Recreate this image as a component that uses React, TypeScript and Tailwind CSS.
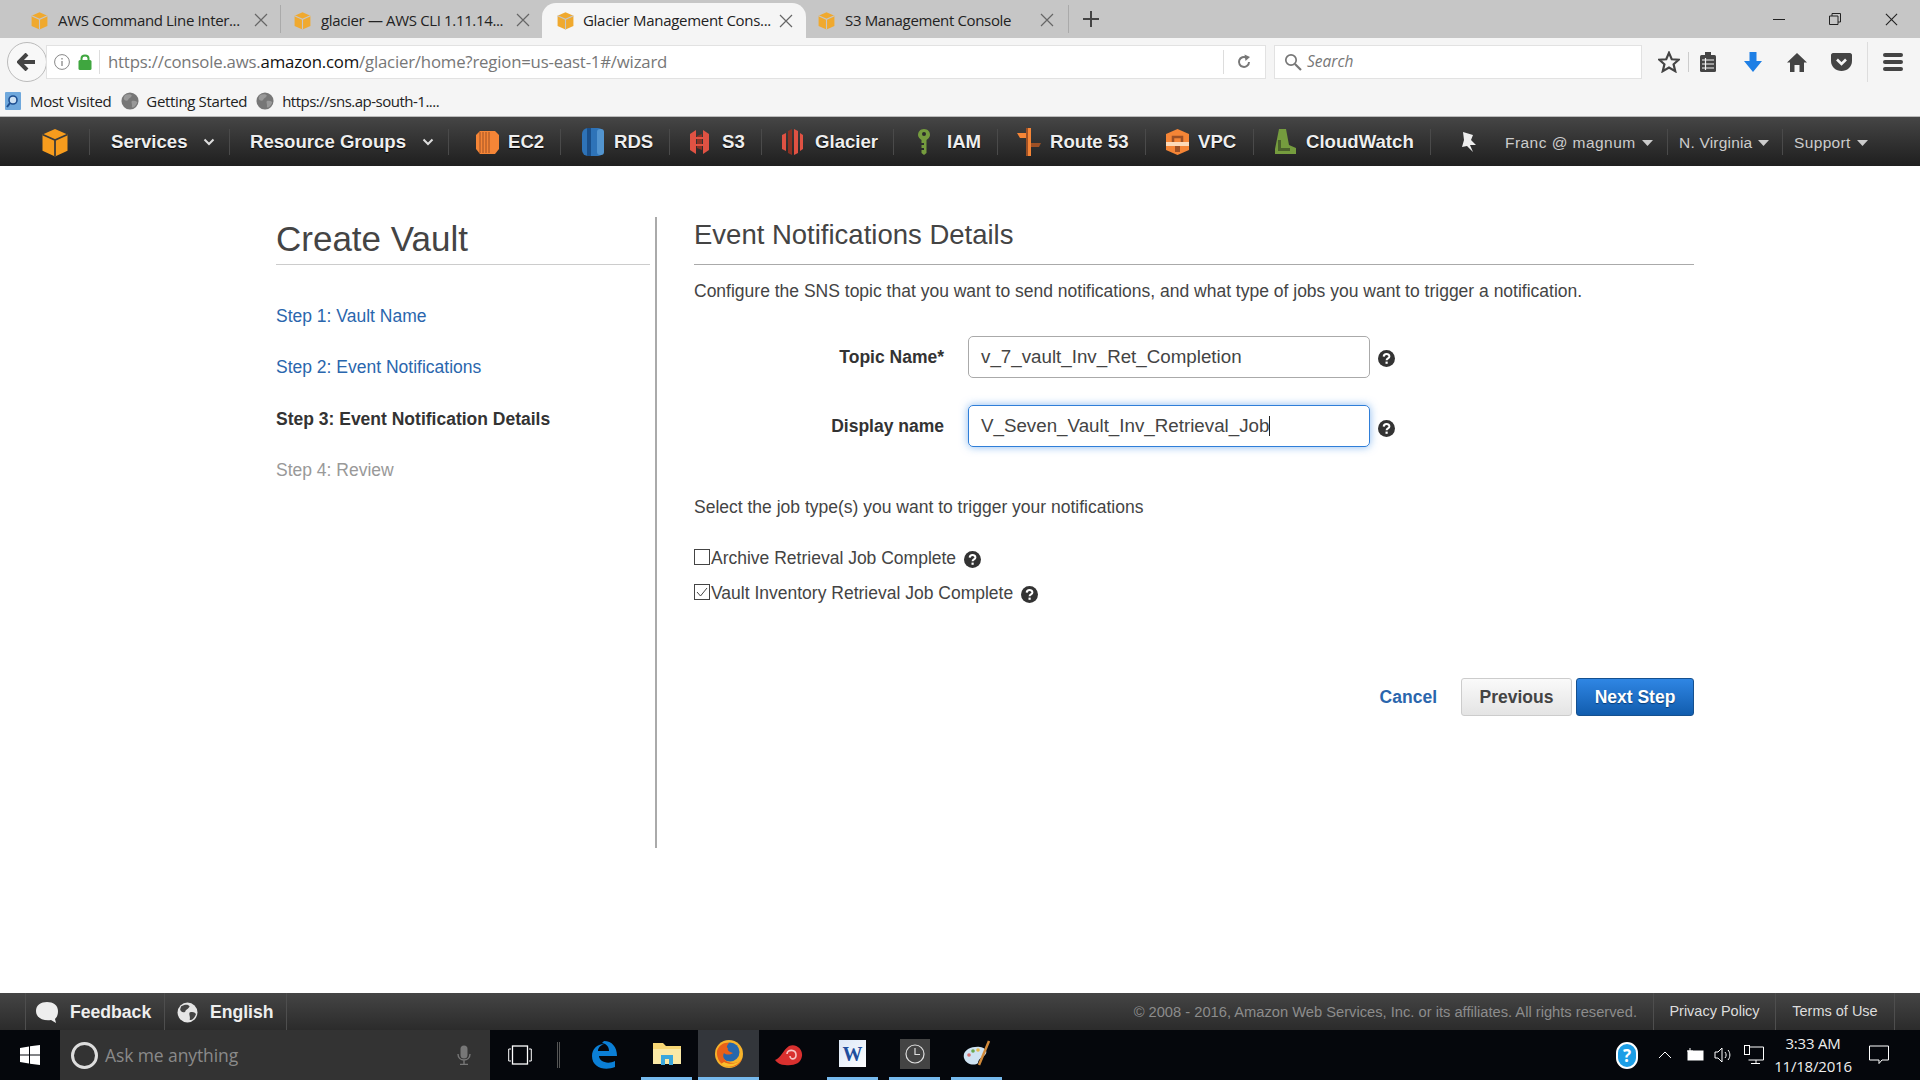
import React from "react";

const Cube = ({ s = 20, c = "#f0a92e", d = "#c6c6c6" }: { s?: number; c?: string; d?: string }) => (
  <svg width={s} height={s} viewBox="0 0 24 24" className="shrink-0">
    <polygon points="2,6 12,1.5 22,6 22,19 12,23.5 2,19" fill={c} />
    <path d="M2 6 L12 10.5 L22 6 M12 10.5 V23.5" stroke={d} strokeWidth="1.4" fill="none" />
  </svg>
);

const X = ({ s = 14, c = "#666" }: { s?: number; c?: string }) => (
  <svg width={s} height={s} viewBox="0 0 14 14" className="shrink-0">
    <path d="M1 1 L13 13 M13 1 L1 13" stroke={c} strokeWidth="1.2" />
  </svg>
);

const Globe = ({ s = 20, c = "#8a8a8a", l = "#d5d5d5" }: { s?: number; c?: string; l?: string }) => (
  <svg width={s} height={s} viewBox="0 0 20 20" className="shrink-0">
    <circle cx="10" cy="10" r="9.5" fill={l} />
    <path d="M4 4 C7 2 11 2 12 4 C11 7 8 7 8 9 C6 11 3 9 3 7Z M12 10 C15 9 18 10 18 12 C16 16 14 18 12 17 C13 14 11 12 12 10Z" fill={c} />
  </svg>
);

const Help = ({ s = 17 }: { s?: number }) => (
  <svg width={s} height={s} viewBox="0 0 17 17" className="shrink-0">
    <circle cx="8.5" cy="8.5" r="8.5" fill="#333" />
    <path d="M5.7 6.6 C5.8 3.3 11.4 3.2 11.4 6.4 C11.4 8.4 8.6 8.4 8.6 10.3" stroke="#fff" strokeWidth="2" fill="none" />
    <rect x="7.5" y="11.6" width="2.2" height="2.2" fill="#fff" />
  </svg>
);

const Chev = () => (
  <svg width="12" height="8" viewBox="0 0 12 8" className="shrink-0">
    <path d="M1.5 1.5 L6 6 L10.5 1.5" stroke="#ddd" strokeWidth="2" fill="none" />
  </svg>
);

const Caret = () => (
  <svg width="11" height="6" viewBox="0 0 11 6" className="shrink-0">
    <path d="M0 0 H11 L5.5 6Z" fill="#ccc" />
  </svg>
);

const Ec2 = () => (
  <svg width="23" height="26" viewBox="0 0 23 26" className="shrink-0">
    <polygon points="4,2 19,2 23,6 23,20 19,25 4,25 0,20 0,6" fill="#f58536" />
    <path d="M4 3V24M7 3V24M10 3V24M13 3V24" stroke="#9d5025" strokeWidth="1" />
  </svg>
);
const Rds = () => (
  <svg width="24" height="28" viewBox="0 0 24 28" className="shrink-0">
    <rect x="1" y="0" width="22" height="28" rx="6" fill="#2e73b8" />
    <rect x="6" y="0" width="4" height="28" fill="#1a4f8a" />
    <rect x="16" y="1" width="7" height="26" rx="3" fill="#5294cf" />
  </svg>
);
const S3 = () => (
  <svg width="19" height="26" viewBox="0 0 19 26" className="shrink-0">
    <polygon points="0,5 6,1 6,25 0,21" fill="#e05243" />
    <polygon points="19,5 13,1 13,25 19,21" fill="#e05243" />
    <polygon points="7,7 12,5 12,21 7,19" fill="#8c3123" />
    <path d="M6 9 H13 M6 16 H13" stroke="#e05243" strokeWidth="2" />
  </svg>
);
const Glacier = () => (
  <svg width="21" height="26" viewBox="0 0 21 26" className="shrink-0">
    <polygon points="0,6 4,4 4,22 0,20" fill="#e05243" />
    <polygon points="6,2 10,0 10,26 6,24" fill="#8c3123" />
    <polygon points="12,0 16,2 16,24 12,26" fill="#e05243" />
    <polygon points="18,4 21,6 21,20 18,22" fill="#e05243" />
  </svg>
);
const Iam = () => (
  <svg width="12" height="26" viewBox="0 0 12 26" className="shrink-0">
    <path d="M6 0 C10 0 12 3 12 6 C12 8 10 10 8.5 11 V24 L6 26 L3.5 24 V21 H6 V19 H3.5 V16 H6 V14 H3.5 V11 C2 10 0 8 0 6 C0 3 2 0 6 0Z" fill="#759c3e" />
    <circle cx="6" cy="5" r="2" fill="#2b2b2b" />
  </svg>
);
const Route = () => (
  <svg width="24" height="28" viewBox="0 0 24 28" className="shrink-0">
    <rect x="9" y="0" width="5" height="28" fill="#f58536" />
    <polygon points="0,5 9,5 9,10 3,10" fill="#f58536" />
    <polygon points="14,15 24,15 22,19 14,19" fill="#9d5025" />
    <rect x="9" y="0" width="2" height="28" fill="#9d5025" />
  </svg>
);
const Vpc = () => (
  <svg width="23" height="26" viewBox="0 0 23 26" className="shrink-0">
    <polygon points="11.5,0 23,5 23,21 11.5,26 0,21 0,5" fill="#f58536" />
    <path d="M7 13 V8 H16 V13" stroke="#9d5025" strokeWidth="2.5" fill="none" />
    <rect x="0" y="13" width="23" height="4" fill="#fcd9b8" />
    <rect x="9" y="17" width="5" height="6" fill="#9d5025" />
  </svg>
);
const Cw = () => (
  <svg width="24" height="26" viewBox="0 0 24 26" className="shrink-0">
    <polygon points="3,20 7,0 14,0 17,16 24,19 24,25 3,25" fill="#759c3e" />
    <polygon points="6,11 9,11 9,19 18,19 18,22 6,22" fill="#4b612c" />
  </svg>
);

type NavItem = { w: string; icon?: React.ReactNode; label: string; gap?: string; pl: string; chev?: boolean };
const navItems: NavItem[] = [
  { w: "w-[140px]", label: "Services", pl: "pl-[21px]", chev: true, gap: "gap-[15px]" },
  { w: "w-[219px]", label: "Resource Groups", pl: "pl-[20px]", chev: true, gap: "gap-[16px]" },
  { w: "w-[112px]", icon: <Ec2 />, label: "EC2", pl: "pl-[27px]", gap: "gap-[9px]" },
  { w: "w-[109px]", icon: <Rds />, label: "RDS", pl: "pl-[20px]", gap: "gap-[9px]" },
  { w: "w-[92px]", icon: <S3 />, label: "S3", pl: "pl-[20px]", gap: "gap-[13px]" },
  { w: "w-[132px]", icon: <Glacier />, label: "Glacier", pl: "pl-[20px]", gap: "gap-[12px]" },
  { w: "w-[104px]", icon: <Iam />, label: "IAM", pl: "pl-[24px]", gap: "gap-[17px]" },
  { w: "w-[148px]", icon: <Route />, label: "Route 53", pl: "pl-[19px]", gap: "gap-[9px]" },
  { w: "w-[108px]", icon: <Vpc />, label: "VPC", pl: "pl-[20px]", gap: "gap-[9px]" },
  { w: "w-[177px]", icon: <Cw />, label: "CloudWatch", pl: "pl-[18px]", gap: "gap-[10px]" },
];

const sans = "font-['Liberation_Sans',Arial,sans-serif]";
const ui = "font-['Open_Sans','Noto_Sans',sans-serif]";

const Tab = ({ title, w, pl, closeGap }: { title: string; w: string; pl: string; closeGap: string }) => (
  <div className={`${w} ${pl} h-[38px] pt-[2px] flex items-center shrink-0 text-[15px] text-[#222] ${ui} tracking-[-0.35px]`}>
    <Cube s={19} />
    <span className={`ml-[9px] mr-[7px] whitespace-nowrap ${closeGap}`}>{title}</span>
    <X />
  </div>
);

function Browser() {
  return (
    <>
      <div className="h-[38px] bg-[#c6c6c6] flex shrink-0 items-center">
        <Tab title="AWS Command Line Inter..." w="w-[280px]" pl="pl-[30px]" closeGap="w-[189px]" />
        <div className="w-px h-[28px] bg-[#aaa]" />
        <Tab title="glacier — AWS CLI 1.11.14..." w="w-[261px]" pl="pl-[12px]" closeGap="w-[188px]" />
        <div className="w-[264px] h-[35px] self-end bg-[#f5f5f5] rounded-t-[14px] shrink-0 flex items-center pl-[14px] text-[15px] text-[#222] tracking-[-0.3px]">
          <Cube s={19} />
          <span className={`ml-[8px] w-[196px] whitespace-nowrap ${ui}`}>Glacier Management Cons...</span>
          <X />
        </div>
        <Tab title="S3 Management Console" w="w-[262px]" pl="pl-[11px]" closeGap="w-[188px]" />
        <div className="w-px h-[28px] bg-[#aaa]" />
        <svg width="16" height="16" viewBox="0 0 16 16" className="ml-[14px] shrink-0">
          <path d="M8 0V16M0 8H16" stroke="#444" strokeWidth="2" />
        </svg>
        <div className="ml-auto flex items-center">
          <div className="w-[12px] h-px bg-[#222] mr-[44px]" />
          <svg width="12" height="12" viewBox="0 0 12 12" className="mr-[44px]">
            <path d="M0.5 3 H9 V11.5 H0.5Z M3 3 V0.5 H11.5 V9 H9" stroke="#222" fill="none" />
          </svg>
          <div className="mr-[22px]"><X s={13} c="#222" /></div>
        </div>
      </div>

      <div className="h-[78px] bg-[#f5f5f5] shrink-0 flex flex-col">
        <div className="h-[48px] flex items-center shrink-0">
          <div className="ml-[7px] w-[40px] h-[40px] rounded-full border border-[#bbb] bg-[#f8f8f8] flex items-center justify-center shrink-0">
            <svg width="20" height="18" viewBox="0 0 20 18">
              <path d="M10 1 L2 9 L10 17 M2 9 H18" stroke="#444" strokeWidth="4" fill="none" />
            </svg>
          </div>
          <div className="ml-[-1px] h-[34px] w-[1220px] bg-white border border-[#e2e2e2] flex items-center shrink-0 pl-[7px]">
            <svg width="16" height="16" viewBox="0 0 16 16" className="shrink-0">
              <circle cx="8" cy="8" r="7.4" stroke="#888" fill="none" />
              <path d="M8 7V12M8 4V5.5" stroke="#888" strokeWidth="1.3" />
            </svg>
            <svg width="14" height="16" viewBox="0 0 14 16" className="ml-[8px] shrink-0">
              <rect x="0.5" y="6" width="13" height="10" rx="1.5" fill="#3fa63f" />
              <path d="M3.5 6 V4.5 C3.5 0.5 10.5 0.5 10.5 4.5 V6" stroke="#3fa63f" strokeWidth="2" fill="none" />
            </svg>
            <div className="ml-[7px] w-px h-[24px] bg-[#ddd]" />
            <span className={`ml-[8px] text-[16.8px] text-[#777] whitespace-nowrap flex-1 ${ui} tracking-[-0.2px]`}>
              https://console.aws.<span className="text-[#111]">amazon.com</span>/glacier/home?region=us-east-1#/wizard
            </span>
            <div className="w-px h-[24px] bg-[#ddd]" />
            <svg width="16" height="16" viewBox="0 0 16 16" className="ml-[12px] mr-[13px] shrink-0">
              <path d="M13 8 A5 5 0 1 1 10.5 3.6" stroke="#777" strokeWidth="2" fill="none" />
              <path d="M8.5 0.5 L14 3 L9.5 7Z" fill="#777" />
            </svg>
          </div>
          <div className="ml-[8px] h-[34px] w-[368px] bg-white border border-[#e2e2e2] flex items-center shrink-0 pl-[9px]">
            <svg width="18" height="18" viewBox="0 0 18 18">
              <circle cx="7" cy="7" r="5.2" stroke="#777" strokeWidth="1.7" fill="none" />
              <path d="M11 11 L17 17" stroke="#777" strokeWidth="2.2" />
            </svg>
            <span className={`ml-[5px] text-[15.5px] italic text-[#777] ${ui}`}>Search</span>
          </div>
          <svg width="22" height="22" viewBox="0 0 24 24" className="ml-[16px] shrink-0">
            <polygon points="12,2 15,9 22.5,9.5 17,14.5 18.8,22 12,18 5.2,22 7,14.5 1.5,9.5 9,9" stroke="#444" strokeWidth="2.4" fill="none" />
          </svg>
          <div className="ml-[8px] w-px h-[20px] bg-[#ccc]" />
          <svg width="18" height="20" viewBox="0 0 18 20" className="ml-[10px] shrink-0">
            <rect x="1" y="3" width="16" height="17" rx="1.5" fill="#444" />
            <rect x="6" y="0" width="6" height="4" fill="#444" />
            <path d="M3 8H15M3 12H15M3 16H15M6.5 6V18" stroke="#f5f5f5" strokeWidth="1.2" />
          </svg>
          <svg width="18" height="20" viewBox="0 0 18 20" className="ml-[27px] shrink-0">
            <path d="M5.5 0 H12.5 V9 H18 L9 20 L0 9 H5.5Z" fill="#1e7fe5" />
          </svg>
          <svg width="20" height="19" viewBox="0 0 20 19" className="ml-[25px] shrink-0">
            <path d="M10 0 L20 9.5 H17 V19 H12.5 V12 H7.5 V19 H3 V9.5 H0Z" fill="#444" />
          </svg>
          <svg width="21" height="18" viewBox="0 0 21 18" className="ml-[24px] shrink-0">
            <path d="M2 0 H19 C20 0 21 1 21 2 V8 C21 14 16 18 10.5 18 C5 18 0 14 0 8 V2 C0 1 1 0 2 0Z" fill="#444" />
            <path d="M6 6.5 L10.5 11 L15 6.5" stroke="#f5f5f5" strokeWidth="2.6" fill="none" />
          </svg>
          <div className="ml-[15px] w-px h-[40px] bg-[#ddd]" />
          <div className="ml-[15px] w-[20px] flex flex-col gap-[3px] shrink-0">
            <div className="h-[4px] bg-[#444] rounded-sm" />
            <div className="h-[4px] bg-[#444] rounded-sm" />
            <div className="h-[4px] bg-[#444] rounded-sm" />
          </div>
        </div>
        <div className={`flex-1 flex items-center pl-[5px] text-[15px] text-[#222] ${ui} tracking-[-0.35px]`}>
          <svg width="16" height="18" viewBox="0 0 16 18" className="shrink-0">
            <rect width="16" height="18" rx="1" fill="#6fa8dc" />
            <circle cx="8" cy="8" r="4" stroke="#1e4f91" strokeWidth="1.6" fill="#cfe2f3" />
            <path d="M5 11 L2 15" stroke="#1e4f91" strokeWidth="2" />
          </svg>
          <span className="ml-[9px]">Most Visited</span>
          <div className="ml-[10px]"><Globe s={18} c="#999" l="#777" /></div>
          <span className="ml-[7px]">Getting Started</span>
          <div className="ml-[9px]"><Globe s={18} c="#999" l="#777" /></div>
          <span className="ml-[8px] tracking-[-0.5px]">https://sns.ap-south-1....</span>
        </div>
      </div>
    </>
  );
}

function TopNav() {
  return (
    <div className={`h-[50px] shrink-0 bg-gradient-to-b from-[#464646] to-[#1f1f1f] border-t border-[#bbb] flex items-center ${sans}`}>
      <div className="w-[90px] h-[26px] border-r border-[#4a4a4a] flex items-center pl-[40px] shrink-0">
        <Cube s={30} c="#f79c1d" d="#3a3a3a" />
      </div>
      {navItems.map((n) => (
        <div
          key={n.label}
          className={`${n.w} ${n.pl} ${n.gap ?? "gap-[20px]"} h-[26px] border-r border-[#4a4a4a] flex items-center shrink-0 text-[18.6px] font-bold text-[#eee] whitespace-nowrap [text-shadow:0_1px_1px_#000]`}
        >
          {n.icon}
          <span>{n.label}</span>
          {n.chev && <Chev />}
        </div>
      ))}
      <div className="w-[63px] pl-[29px] shrink-0">
        <svg width="18" height="20" viewBox="0 0 18 20">
          <path d="M3 0 L13 3 L11 8 L16 13 L10 13 L13 20 L7 14 L2 15 L4 8Z" fill="#eee" />
        </svg>
      </div>
      <div className="w-[174px] h-[26px] pl-[11px] pt-[2px] gap-[6px] border-r border-[#4a4a4a] flex items-center shrink-0 text-[15.5px] text-[#ccc] tracking-[0.45px] whitespace-nowrap">
        Franc @ magnum <Caret />
      </div>
      <div className="w-[115px] h-[26px] pl-[11px] pt-[2px] gap-[6px] border-r border-[#4a4a4a] flex items-center shrink-0 text-[15.5px] text-[#ccc] tracking-[0.2px] whitespace-nowrap">
        N. Virginia <Caret />
      </div>
      <div className="h-[26px] pl-[11px] pt-[2px] gap-[6px] flex items-center shrink-0 text-[15.5px] text-[#ccc] tracking-[0.35px] whitespace-nowrap">
        Support <Caret />
      </div>
    </div>
  );
}

const steps: [string, string][] = [
  ["Step 1: Vault Name", "text-[#2a66ad]"],
  ["Step 2: Event Notifications", "text-[#2a66ad]"],
  ["Step 3: Event Notification Details", "text-[#333] font-bold"],
  ["Step 4: Review", "text-[#999]"],
];

function Main() {
  return (
    <div className={`flex-1 flex items-start pl-[276px] pt-[51px] text-[#444] text-[17.5px] ${sans}`}>
      <div className="w-[381px] h-[631px] border-r-2 border-[#aaa] pr-[5px] shrink-0">
        <div className="h-[48px] border-b border-[#ccc] text-[35px] leading-[44px] text-[#444]">Create Vault</div>
        <div className="mt-[25px] flex flex-col">
          {steps.map(([t, c]) => (
            <div key={t} className={`h-[51.5px] flex items-center ${c}`}>{t}</div>
          ))}
        </div>
      </div>

      <div className="ml-[37px] w-[1000px] shrink-0">
        <div className="h-[48px] border-b border-[#aaa] text-[27.5px] leading-[36px] text-[#444]">Event Notifications Details</div>
        <div className="mt-[14px] h-[24px] leading-[24px]">
          Configure the SNS topic that you want to send notifications, and what type of jobs you want to trigger a notification.
        </div>
        <div className="mt-[33px] flex items-center h-[42px]">
          <div className="w-[250px] text-right font-bold text-[#333]">Topic Name*</div>
          <div className="ml-[24px] w-[402px] h-[42px] border border-[#aaa] rounded-[5px] flex items-center pl-[12px] text-[18.75px]">
            v_7_vault_Inv_Ret_Completion
          </div>
          <div className="ml-[8px] mt-[3px]"><Help /></div>
        </div>
        <div className="mt-[27px] flex items-center h-[42px]">
          <div className="w-[250px] text-right font-bold text-[#333]">Display name</div>
          <div className="ml-[24px] w-[402px] h-[42px] border border-[#2f7ed8] rounded-[5px] shadow-[0_0_9px_rgba(60,140,230,0.6)] flex items-center pl-[12px] text-[18.75px]">
            V_Seven_Vault_Inv_Retrieval_Job
            <span className="w-px h-[20px] bg-[#222]" />
          </div>
          <div className="ml-[8px] mt-[4px]"><Help /></div>
        </div>
        <div className="mt-[48px] h-[24px] leading-[24px]">Select the job type(s) you want to trigger your notifications</div>
        <div className="mt-[28px] flex items-center h-[22px]">
          <span className="w-[16px] h-[16px] border border-[#444] bg-white shrink-0 mb-[3px]" />
          <span className="ml-px">Archive Retrieval Job Complete</span>
          <div className="ml-[8px] mt-[2px]"><Help /></div>
        </div>
        <div className="mt-[13px] flex items-center h-[22px]">
          <span className="w-[16px] h-[16px] border border-[#444] bg-white shrink-0 mb-[3px] flex items-center justify-center">
            <svg width="12" height="10" viewBox="0 0 12 10">
              <path d="M1 5 L4.5 9 L11 1" stroke="#444" strokeWidth="1" fill="none" />
            </svg>
          </span>
          <span className="ml-px">Vault Inventory Retrieval Job Complete</span>
          <div className="ml-[8px] mt-[2px]"><Help /></div>
        </div>
        <div className="mt-[74px] flex items-center justify-end">
          <span className="font-bold text-[#2a66ad] text-[17.5px] mr-[24px]">Cancel</span>
          <div className="w-[111px] h-[38px] rounded-[3px] border border-[#ccc] bg-gradient-to-b from-[#fafafa] to-[#e4e4e4] flex items-center justify-center font-bold text-[17.5px] text-[#444] mr-[4px]">Previous</div>
          <div className="w-[118px] h-[38px] rounded-[3px] border border-[#15508f] bg-gradient-to-b from-[#2f86e4] to-[#115dae] flex items-center justify-center font-bold text-[17.5px] text-white [text-shadow:0_1px_1px_#0a3c75]">Next Step</div>
        </div>
      </div>
    </div>
  );
}

function Footer() {
  return (
    <div className={`h-[37px] shrink-0 bg-gradient-to-b from-[#454545] to-[#2b2b2b] flex items-center ${sans}`}>
      <div className="ml-[25px] w-[140px] h-[37px] border-x border-[#4e4e4e] flex items-center pl-[10px] pt-[1px] shrink-0">
        <svg width="23" height="23" viewBox="0 0 23 23">
          <path d="M11 1 C17 1 22 4 22 10 C22 14 21 16 19 18 L20 22 L15 19 C7 20 0 17 0 10 C0 4 5 1 11 1Z" fill="#eee" />
        </svg>
        <span className="ml-[11px] font-bold text-[17.6px] text-[#eee]">Feedback</span>
      </div>
      <div className="w-[122px] h-[37px] border-r border-[#4e4e4e] flex items-center pl-[12px] pt-[1px] shrink-0">
        <Globe s={21} c="#444" l="#e5e5e5" />
        <span className="ml-[12px] font-bold text-[17.6px] text-[#eee]">English</span>
      </div>
      <div className="ml-auto pt-[1px] text-[14.7px] text-[#8c8c8c] whitespace-nowrap">© 2008 - 2016, Amazon Web Services, Inc. or its affiliates. All rights reserved.</div>
      <div className="ml-[16px] w-[123px] h-[37px] pt-[1px] border-x border-[#4e4e4e] flex items-center justify-center text-[14.5px] text-[#ddd] shrink-0">Privacy Policy</div>
      <div className="w-[119px] h-[37px] pt-[1px] border-r border-[#4e4e4e] flex items-center justify-center text-[14.5px] text-[#ddd] shrink-0">Terms of Use</div>
      <div className="w-[25px] shrink-0" />
    </div>
  );
}

const Running = ({ w, ml, on, children }: { w: string; ml: string; on?: boolean; children: React.ReactNode }) => (
  <div className={`${w} ${ml} h-[50px] shrink-0 flex items-center justify-center border-b-[3px] border-[#76b9ed] ${on ? "bg-[#33363b]" : ""}`}>
    {children}
  </div>
);

function Taskbar() {
  return (
    <div className={`h-[50px] shrink-0 bg-[#05070c] flex items-center ${ui}`}>
      <div className="w-[60px] flex justify-center shrink-0">
        <svg width="20" height="20" viewBox="0 0 20 20">
          <path d="M0 3 L9 1.5 V9.5 H0Z M10 1.3 L20 0 V9.5 H10Z M0 10.5 H9 V18.5 L0 17Z M10 10.5 H20 V20 L10 18.7Z" fill="#fff" />
        </svg>
      </div>
      <div className="w-[430px] h-[50px] bg-[#333] flex items-center pl-[11px] shrink-0">
        <div className="w-[27px] h-[27px] rounded-full border-[3px] border-[#ddd] shrink-0" />
        <span className="ml-[7px] w-[350px] text-[17.5px] text-[#8a8a8a] tracking-[-0.1px]">Ask me anything</span>
        <svg width="14" height="20" viewBox="0 0 14 20" className="shrink-0 ml-[2px]">
          <rect x="3.5" y="0.5" width="7" height="13" rx="3.5" fill="#777" />
          <path d="M1 9 C1 17 13 17 13 9 M7 15V19M3 19.5H11" stroke="#777" strokeWidth="1.4" fill="none" />
        </svg>
      </div>
      <svg width="24" height="20" viewBox="0 0 24 20" className="ml-[18px] shrink-0">
        <rect x="4.5" y="1" width="15" height="18" fill="none" stroke="#fff" strokeWidth="1.3" />
        <path d="M3 4 H0.7 V16 H3 M21 4 H23.3 V16 H21" stroke="#fff" fill="none" />
      </svg>
      <div className="ml-[25px] w-[3px] h-[26px] border-x border-[#555] shrink-0" />
      <svg width="26" height="28" viewBox="0 0 26 28" className="ml-[31px] shrink-0">
        <path d="M13 0 C21 0 26 6 26 15 H8 C8 20 16 24 24 20 V26 C14 30 1 27 1 15 C1 8 6 3 13 3 C8 5 7 8 7 10 H18 C18 6 16 3 11 2Z" fill="#0b7fd6" />
      </svg>
      <div className="w-[24px] shrink-0" />
      <Running w="w-[51px]" ml="ml-[0px]">
        <svg width="28" height="26" viewBox="0 0 28 26">
          <path d="M0 2 H10 L13 5 H28 V23 H0Z" fill="#f8d775" />
          <rect x="0" y="8" width="28" height="15" fill="#fbe9a6" />
          <path d="M8 24 V14 H20 V24 H16 V18 H12 V24Z" fill="#3aa7dd" />
        </svg>
      </Running>
      <Running w="w-[61px]" ml="ml-[6px]" on>
        <svg width="28" height="28" viewBox="0 0 28 28">
          <circle cx="14" cy="14" r="14" fill="#f7b32b" />
          <circle cx="15" cy="12" r="9.5" fill="#2667ad" />
          <path d="M14 3 C9 2 4 5 2 11 C1 18 6 27 15 27 C21 27 25 24 27 19 C24 23 18 24 13 22 C9 20 7 16 9 13 C11 15 15 15 18 13 C14 12 12 10 13 8 C11 8 12 5 14 3Z" fill="#e8611a" />
          <path d="M6 24 C11 28 21 28 26 20 C22 24 14 25 9 22Z" fill="#f9c02c" />
        </svg>
      </Running>
      <svg width="28" height="22" viewBox="0 0 28 22" className="ml-[16px] shrink-0">
        <path d="M0 16 C6 14 8 6 14 2 C21 -1 28 5 27 12 C26 20 18 22 10 21 C6 21 2 19 0 16Z" fill="#d9302f" />
        <path d="M12 10 C12 5 21 5 21 11 C21 16 15 16 15 12" stroke="#f7c4c4" strokeWidth="1.6" fill="none" />
      </svg>
      <div className="w-[24px] shrink-0" />
      <Running w="w-[51px]" ml="ml-[0px]">
        <div className="w-[27px] h-[27px] bg-gradient-to-br from-[#dbe7f7] to-[#fff] flex items-center justify-center font-bold text-[20px] text-[#1f4e9e] font-['Liberation_Serif',serif]">W</div>
      </Running>
      <Running w="w-[51px]" ml="ml-[11px]">
        <div className="w-[30px] h-[30px] bg-[#444] flex items-center justify-center">
          <svg width="20" height="20" viewBox="0 0 20 20">
            <circle cx="10" cy="10" r="9" stroke="#ddd" strokeWidth="1.2" fill="none" />
            <path d="M10 4V10.5H15" stroke="#ddd" strokeWidth="1.2" fill="none" />
          </svg>
        </div>
      </Running>
      <Running w="w-[51px]" ml="ml-[11px]">
        <svg width="28" height="28" viewBox="0 0 28 28">
          <path d="M1 18 C-1 10 9 6 17 7 C24 8 25 13 21 16 C17 18 15 20 15 23 C12 26 3 25 1 18Z" fill="#cfe3f2" />
          <circle cx="6" cy="15" r="1.8" fill="#d96f6f" />
          <circle cx="10" cy="11" r="1.8" fill="#6aa84f" />
          <circle cx="15" cy="10" r="1.8" fill="#e6b84d" />
          <path d="M26 1 L16 25" stroke="#d28a3a" strokeWidth="2.5" />
        </svg>
      </Running>
      <div className="ml-auto flex items-center text-white shrink-0">
        <div className="w-[22px] h-[27px] rounded-full bg-[#1c9ee6] border-2 border-white flex items-center justify-center font-bold text-[17px] leading-none">?</div>
        <svg width="14" height="8" viewBox="0 0 14 8" className="ml-[20px]"><path d="M1 7 L7 1 L13 7" stroke="#fff" fill="none" /></svg>
        <svg width="18" height="14" viewBox="0 0 18 14" className="ml-[14px]">
          <rect x="2" y="3" width="15" height="9" fill="#fff" stroke="#fff" />
          <path d="M4 0V3M1 3H7" stroke="#fff" />
        </svg>
        <svg width="18" height="16" viewBox="0 0 18 16" className="ml-[10px]">
          <path d="M1 5H4L8 1V15L4 11H1Z" stroke="#fff" fill="none" />
          <path d="M11 5 C12.5 7 12.5 9 11 11 M14 3 C16.5 6 16.5 10 14 13" stroke="#fff" fill="none" />
        </svg>
        <svg width="20" height="20" viewBox="0 0 20 20" className="ml-[12px]">
          <path d="M4.5 2 H19.5 V15 H4.5 M12 15V18M7 18.5H16" stroke="#fff" fill="none" />
          <rect x="0.5" y="0.5" width="5" height="9" fill="#05070c" stroke="#fff" />
        </svg>
        <div className="ml-[6px] w-[86px] flex flex-col items-center text-[15px] leading-[23px] text-[#eee] tracking-[-0.2px]">
          <span>3:33 AM</span>
          <span>11/18/2016</span>
        </div>
        <svg width="20" height="20" viewBox="0 0 20 20" className="ml-[13px] mr-[31px]">
          <path d="M0.5 1 H19.5 V15 H13 L10 18.5 L10 15 H0.5Z" stroke="#fff" fill="none" />
        </svg>
      </div>
    </div>
  );
}

export default function App() {
  return (
    <div className="w-[1920px] h-[1080px] overflow-hidden flex flex-col bg-white">
      <Browser />
      <TopNav />
      <Main />
      <Footer />
      <Taskbar />
    </div>
  );
}
